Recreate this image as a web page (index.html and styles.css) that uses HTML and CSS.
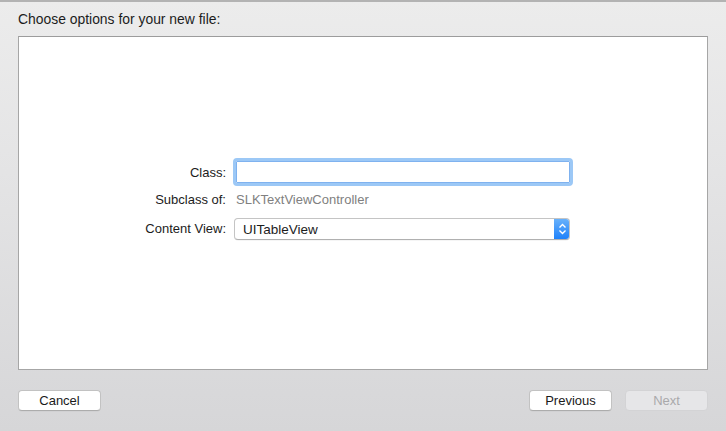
FILE: index.html
```html
<!DOCTYPE html>
<html>
<head>
<meta charset="utf-8">
<link rel="stylesheet" href="styles.css">
</head>
<body>
<div class="sheet">
  <div class="title">Choose options for your new file:</div>
  <div class="panel">
    <div class="form">
      <div class="label">Class:</div>
      <div class="field-wrap"><div class="field"></div></div>
      <div class="label">Subclass of:</div>
      <div class="value">SLKTextViewController</div>
      <div class="label label-popup">Content View:</div>
      <div class="popup">
        <span class="popup-text">UITableView</span>
        <span class="stepper">
          <svg width="9" height="12" viewBox="0 0 9 12"><path d="M1.5 4.5 L4.5 1.5 L7.5 4.5 M1.5 7.5 L4.5 10.5 L7.5 7.5" fill="none" stroke="#fff" stroke-width="1.4"/></svg>
        </span>
      </div>
    </div>
  </div>
  <div class="footer">
    <button class="btn">Cancel</button>
    <div class="right">
      <button class="btn">Previous</button>
      <button class="btn disabled">Next</button>
    </div>
  </div>
</div>
</body>
</html>
```
FILE: styles.css
```css
html, body {
  margin: 0;
  padding: 0;
  height: 100%;
}
body {
  font-family: "Liberation Sans", Arial, sans-serif;
  font-size: 13px;
  color: #1a1a1a;
  background: linear-gradient(#ececec 0%, #e4e4e5 40%, #d6d6d8 100%);
  border-top: 2px solid #b3b3b3;
  box-sizing: border-box;
  overflow: hidden;
}
.sheet {
  display: flex;
  flex-direction: column;
}
.title {
  height: 34px;
  box-sizing: border-box;
  padding: 9px 0 0 18px;
  font-size: 13.9px;
  line-height: 17px;
  color: #1c1c1c;
}
.panel {
  margin: 0 18px 0 18px;
  height: 334px;
  box-sizing: border-box;
  background: #fff;
  border: 1px solid #a6a6a6;
  border-top-color: #9c9c9c;
  padding-top: 121px;
}
.form {
  display: grid;
  grid-template-columns: 207px 340px;
  column-gap: 7px;
  grid-template-rows: 29px 26px 27px;
  align-items: center;
}
.label {
  text-align: right;
  color: #1c1c1c;
  line-height: 16px;
}
.label-popup {
  align-self: end;
  padding-bottom: 3px;
}
.value {
  color: #808080;
  padding-left: 3px;
  line-height: 16px;
}
.field-wrap {
  height: 28px;
  box-sizing: border-box;
  border: 3px solid #9cc8f6;
  border-radius: 4px;
  padding: 0;
  background: #fff;
  align-self: start;
}
.field {
  height: 100%;
  box-sizing: border-box;
  border: 1px solid #7fb2ef;
  border-radius: 1px;
}
.popup {
  align-self: end;
  height: 22px;
  width: 336px;
  margin-left: 1px;
  box-sizing: border-box;
  border: 1px solid #c4c4c4;
  border-bottom-color: #b0b0b0;
  border-radius: 4px;
  background: #fff;
  display: flex;
  align-items: center;
  overflow: hidden;
  box-shadow: 0 0.5px 0.5px rgba(0,0,0,0.08);
}
.popup-text {
  flex: 1;
  padding-left: 8px;
  font-size: 13.5px;
  color: #1c1c1c;
}
.stepper {
  width: 16px;
  height: 22px;
  margin-top: -1px;
  margin-bottom: -1px;
  margin-right: -1px;
  background: linear-gradient(#6bb3fb, #1b7ffa);
  border-radius: 0 4px 4px 0;
  display: flex;
  align-items: center;
  justify-content: center;
}
.stepper svg { display: block; }
.footer {
  display: flex;
  justify-content: space-between;
  padding: 20px 18px 0 18px;
}
.right {
  display: flex;
  gap: 13px;
}
.btn {
  width: 83px;
  height: 21px;
  box-sizing: border-box;
  font-family: "Liberation Sans", Arial, sans-serif;
  font-size: 13px;
  color: #1a1a1a;
  background: #fff;
  border: 1px solid #c2c2c2;
  border-bottom-color: #acacac;
  border-radius: 4px;
  padding: 0;
  line-height: 18px;
  box-shadow: 0 0.5px 0.5px rgba(0,0,0,0.06);
}
.btn.disabled {
  background: #e6e6e8;
  color: #a9a9ab;
  border-color: #d3d3d5;
  box-shadow: none;
}
```
